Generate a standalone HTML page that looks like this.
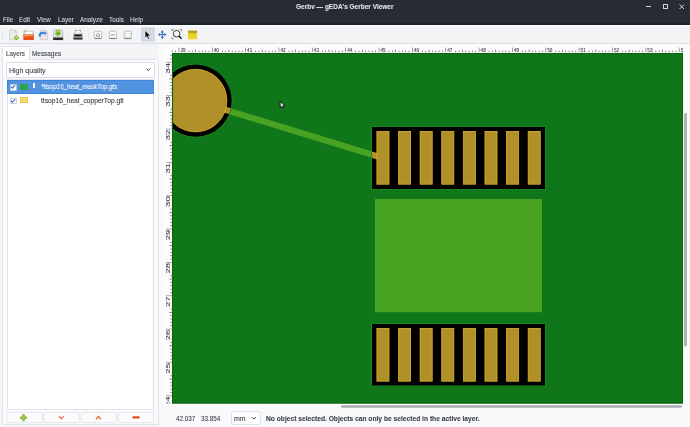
<!DOCTYPE html>
<html><head><meta charset="utf-8">
<style>
html,body{margin:0;padding:0;}
body{width:690px;height:427px;overflow:hidden;position:relative;background:#f8f9fa;font-family:"Liberation Sans",sans-serif;color:#3a3e44;}
.a{position:absolute;}
.t{position:absolute;white-space:nowrap;line-height:1;will-change:transform;-webkit-text-stroke:0.08px currentColor;}
#title{left:0;top:0;width:690px;height:25.4px;background:#272b33;box-shadow:inset 0 -1.6px 0 #1c1f25;}
#toolbar{left:0;top:25.4px;width:690px;height:17.6px;background:#f3f4f6;border-bottom:1px solid #dcdee3;box-shadow:inset 0 1.4px 0 #fdfdfe;}
</style></head><body>
<div id="title" class="a"></div>
<div class="t" style="left:296px;top:3.8px;font-size:6.5px;font-weight:bold;color:#e2e4e8;">Gerbv — gEDA's Gerber Viewer</div>
<!-- window controls -->
<div class="a" style="left:646px;top:6px;width:5px;height:1px;background:#d3d5da;"></div>
<div class="a" style="left:663px;top:4px;width:3px;height:3px;border:1px solid #d3d5da;"></div>
<svg class="a" style="left:679px;top:4px" width="6" height="6"><path d="M0.5 0.5L5 5M5 0.5L0.5 5" stroke="#d3d5da" stroke-width="1"/></svg>
<!-- menu -->
<div class="t" style="left:3px;top:17.3px;font-size:6.4px;color:#d3d5da;">File</div>
<div class="t" style="left:19px;top:17.3px;font-size:6.4px;color:#d3d5da;">Edit</div>
<div class="t" style="left:37px;top:17.3px;font-size:6.4px;color:#d3d5da;">View</div>
<div class="t" style="left:57.5px;top:17.3px;font-size:6.4px;color:#d3d5da;">Layer</div>
<div class="t" style="left:79.5px;top:17.3px;font-size:6.4px;color:#d3d5da;">Analyze</div>
<div class="t" style="left:108.5px;top:17.3px;font-size:6.4px;color:#d3d5da;">Tools</div>
<div class="t" style="left:130.3px;top:17.3px;font-size:6.4px;color:#d3d5da;">Help</div>

<div id="toolbar" class="a"></div>


<!-- toolbar icons -->
<svg class="a" style="left:0;top:25px" width="200" height="19">
  <!-- drag handle -->
  <g fill="#c5c8ce"><rect x="2" y="7" width="0.8" height="0.8"/><rect x="2" y="9" width="0.8" height="0.8"/><rect x="2" y="11" width="0.8" height="0.8"/><rect x="2" y="13" width="0.8" height="0.8"/></g>
  <!-- new -->
  <path d="M9.6 4.7H14.6L17 7.1V14.7H9.6Z" fill="#ececec" stroke="#c4c4c4" stroke-width="0.6"/>
  <path d="M14.6 4.7V7.1H17" fill="#d8d8d8" stroke="#b8b8b8" stroke-width="0.5"/>
  <path d="M16.4 9.9L19.2 12.7L16.4 15.3L13.6 12.7Z" fill="#5fa81c"/>
  <circle cx="16.4" cy="12.6" r="1.9" fill="#8cc63a"/>
  <circle cx="16.4" cy="11.9" r="0.9" fill="#e6ee70"/>
  <!-- open -->
  <path d="M23.8 5.4H27.6L28.6 6.4H33.4V14.6H23.8Z" fill="#dcdcdc" stroke="#b4b4b4" stroke-width="0.5"/>
  <rect x="24.4" y="5.9" width="1.4" height="1.2" fill="#f0a040"/>
  <rect x="25.4" y="6.9" width="7" height="3.4" fill="#fdfdfd" stroke="#d0d0d0" stroke-width="0.3"/>
  <path d="M23.4 9.6H33.9V14.2Q33.9 14.9 33.2 14.9H24.1Q23.4 14.9 23.4 14.2Z" fill="#e9501c"/>
  <rect x="23.4" y="9.6" width="10.5" height="1.8" fill="#f38a44"/>
  <rect x="24.4" y="10.6" width="4" height="0.5" fill="#fbb880"/>
  <!-- revert -->
  <path d="M40.3 5.2H45.5L47.6 7.3V14.7H40.3Z" fill="#e8e8e8" stroke="#c0c0c0" stroke-width="0.6"/>
  <path d="M38.6 11.2C38.2 8.2 40.6 6.2 43.6 6.9L45.2 7.4L44.8 5.8L46.8 8.6L43.8 10.2L44.4 8.9C42.2 8.4 40.4 9.6 40.6 12Z" fill="#3f86d4"/>
  <!-- save -->
  <path d="M53.2 7L54.4 4.6H61.8L63 7V14.8H53.2Z" fill="#dcdcdc" stroke="#a8a8a8" stroke-width="0.5"/>
  <rect x="53.1" y="12.6" width="10" height="2.3" fill="#2a2a2a" rx="0.6"/>
  <path d="M56.3 5.1H59.9V8H61.6L58.1 11.3L54.6 8H56.3Z" fill="#6ab820"/>
  <rect x="57" y="5.4" width="2.2" height="1.2" fill="#e8e060"/>
  <!-- sep -->
  <rect x="67.3" y="7.5" width="0.6" height="6" fill="#e0e2e6"/>
  <!-- print -->
  <rect x="75.2" y="5.2" width="5.6" height="3" fill="#fff" stroke="#8a8a8a" stroke-width="0.6"/>
  <rect x="73.4" y="7.8" width="9.2" height="6.6" rx="1" fill="#9a9ca0"/>
  <rect x="74.4" y="9.6" width="7.2" height="1.6" fill="#111"/>
  <rect x="73.4" y="12.8" width="9.2" height="1.8" rx="0.6" fill="#333"/>
  <rect x="74.6" y="7.3" width="6.8" height="1.5" fill="#f4f4f4"/>
  <rect x="88" y="7.5" width="0.6" height="6" fill="#e0e2e6"/>
  <!-- zoom icons -->
  <g fill="#fafafa" stroke="#9a9a9a" stroke-width="0.6">
    <rect x="94.3" y="6.2" width="7.4" height="7.4" rx="1.3"/>
    <rect x="109.3" y="6.2" width="7.4" height="7.4" rx="1.3"/>
    <rect x="124.1" y="6.2" width="7.4" height="7.4" rx="1.3"/>
  </g>
  <g stroke="#555" stroke-width="0.7" fill="none">
    <path d="M94.6 13.4H101.4M109.6 13.4H116.4M124.4 13.4H131.2"/>
  </g>
  <path d="M96.5 9.6L98 8.2L99.5 9.6V11.2H96.5Z" fill="none" stroke="#6a7a5a" stroke-width="0.7"/>
  <path d="M111 9.9H115M125.8 8.2V9M129.8 8.2V9M125.8 10.8V11.6M129.8 10.8V11.6" stroke="#6a7a6a" stroke-width="0.8"/>
  <!-- sep -->
  <rect x="137.5" y="7.5" width="0.6" height="6" fill="#e0e2e6"/>
  <!-- pointer pressed -->
  <rect x="141" y="2.3" width="14" height="14.4" rx="1.5" fill="#d3d8e2"/>
  <path d="M145 5.6L150.4 10.8L148.1 11L149.6 13.6L148.4 14.2L147 11.5L145.2 13Z" fill="#000" stroke="#fff" stroke-width="0.5"/>
  <!-- pan -->
  <g fill="#2d6db8">
    <path d="M162.3 5.3L164 7.4H160.6Z M162.3 14L164 11.8H160.6Z M158 9.6L160.1 7.9V11.3Z M166.6 9.6L164.5 7.9V11.3Z"/>
    <rect x="161.8" y="6.8" width="1" height="5.6"/>
    <rect x="159.5" y="9.1" width="5.6" height="1"/>
  </g>
  <!-- zoom tool -->
  <circle cx="176.6" cy="8.7" r="3.3" fill="#fff" stroke="#222" stroke-width="0.9"/>
  <path d="M178.9 11L181.6 13.7" stroke="#111" stroke-width="1.4"/>
  <path d="M172 6V4.6H173.4M181.6 6V4.6H180.2M172 12.4V13.8H173.4" stroke="#333" stroke-width="0.6" fill="none"/>
  <!-- measure -->
  <rect x="188" y="5.7" width="9" height="8.6" rx="0.6" fill="#eed524"/>
  <rect x="188" y="5.7" width="9" height="2" fill="#b39c2a"/>
  <path d="M189.5 7.5V9.5M191.7 7.5V8.8M193.9 7.5V9.5M196 7.5V8.8" stroke="#a08a20" stroke-width="0.6"/>
</svg>

<!-- left panel -->
<div class="a" style="left:0;top:44px;width:159px;height:383px;background:#f4f5f7;"></div>
<div class="a" style="left:2px;top:46px;width:26px;height:14px;background:#fff;border:1px solid #dfe2e8;border-bottom:none;border-radius:1.5px 1.5px 0 0;"></div>
<div class="a" style="left:29px;top:58.7px;width:129px;height:1px;background:#e2e4e9;"></div>
<div class="a" style="left:2px;top:59.7px;width:155.2px;height:364.6px;background:#fafbfc;border:1px solid #e0e3ea;border-top:none;"></div>
<div class="t" style="left:6px;top:51px;font-size:6.3px;">Layers</div>
<div class="t" style="left:32px;top:51px;font-size:6.4px;">Messages</div>
<div class="a" style="left:6px;top:62px;width:147px;height:14px;background:#fff;border:1px solid #d9dde5;border-radius:2px;"></div>
<div class="t" style="left:9px;top:67px;font-size:7px;">High quality</div>
<div class="a" style="left:7px;top:79px;width:145.2px;height:328.8px;background:#fff;border:1px solid #dfe2e8;"></div>
<div class="a" style="left:7px;top:80.1px;width:144.6px;height:11.7px;background:#5293df;border:1px solid #3e85da;"></div>


<div class="a" style="left:9.9px;top:84.2px;width:4.8px;height:4.8px;background:#fff;border:0.6px solid #c8ccd4;border-radius:1px;"></div>
<svg class="a" style="left:10px;top:84.2px" width="6" height="6"><path d="M1 2.7L2.4 4.2L5.2 1" stroke="#2f6fd0" stroke-width="1.1" fill="none"/></svg>
<div class="a" style="left:19.8px;top:84px;width:8.4px;height:6px;background:#2ea44f;"></div>
<div class="a" style="left:32.9px;top:83.3px;width:1.7px;height:4.7px;background:#e8eef8;box-shadow:inset 0 0 0 0.4px #fff;"></div>
<div class="t" style="left:40.5px;top:83.6px;font-size:6.6px;font-style:italic;color:#fff;transform:scaleX(0.935);transform-origin:0 0;">*ttsop16_heat_maskTop.gts</div>
<div class="a" style="left:9.9px;top:97.6px;width:4.8px;height:4.8px;background:#fff;border:0.6px solid #c8ccd4;border-radius:1px;"></div>
<svg class="a" style="left:10px;top:97.6px" width="6" height="6"><path d="M1 2.7L2.4 4.2L5.2 1" stroke="#2f6fd0" stroke-width="1.1" fill="none"/></svg>
<div class="a" style="left:19.8px;top:97.2px;width:8.4px;height:6.3px;background:#f7d96c;box-shadow:inset 0 0 0 0.5px #d8b84a;"></div>
<div class="t" style="left:40.5px;top:97.8px;font-size:6.7px;color:#31363b;">ttsop16_heat_copperTop.gtl</div>

<!-- rulers & canvas -->
<div class="a" style="left:159px;top:44px;width:531px;height:383px;background:#f9fafb;"></div>
<div class="a" style="left:163px;top:44px;width:521px;height:361px;background:#fcfcfd;"></div>
<svg class="a" style="left:0;top:0" width="690" height="427">
  <defs>
    <clipPath id="cv"><rect x="172" y="53" width="511" height="350.6"/></clipPath>
    <clipPath id="op"><circle cx="195.6" cy="100.65" r="36.2"/><rect x="372" y="127" width="173" height="62"/></clipPath>
  </defs>
  <g clip-path="url(#cv)">
    <rect x="172" y="53" width="511" height="350.6" fill="#10761a"/>
    <rect x="375" y="199" width="167" height="113.2" fill="#47a321"/>
    <line x1="195.5" y1="100.7" x2="383" y2="158" stroke="#47a321" stroke-width="6.2"/>
    <g fill="#1a8a21">
      <circle cx="195.6" cy="100.65" r="37"/>
      <rect x="371.2" y="126.2" width="174.6" height="63.6"/>
      <rect x="371.2" y="323.2" width="174.6" height="63.1"/>
    </g>
    <g fill="#000">
      <circle cx="195.6" cy="100.65" r="36.15"/>
      <rect x="372" y="127" width="173" height="62"/>
      <rect x="372" y="324" width="173" height="61.5"/>
    </g>
    <line x1="195.5" y1="100.7" x2="383" y2="158" stroke="#b09028" stroke-width="6.2" clip-path="url(#op)"/>
    <circle cx="195.6" cy="100.6" r="31.3" fill="#b09028" stroke="#dcb42e" stroke-width="0.8"/>
    <g fill="#b09028" stroke="#dcb42e" stroke-width="0.8">
      <rect x="376.90" y="131.4" width="12.1" height="52.8"/>
      <rect x="398.51" y="131.4" width="12.1" height="52.8"/>
      <rect x="420.12" y="131.4" width="12.1" height="52.8"/>
      <rect x="441.73" y="131.4" width="12.1" height="52.8"/>
      <rect x="463.34" y="131.4" width="12.1" height="52.8"/>
      <rect x="484.95" y="131.4" width="12.1" height="52.8"/>
      <rect x="506.56" y="131.4" width="12.1" height="52.8"/>
      <rect x="528.17" y="131.4" width="12.1" height="52.8"/>
      <rect x="376.90" y="328.4" width="12.1" height="52.8"/>
      <rect x="398.51" y="328.4" width="12.1" height="52.8"/>
      <rect x="420.12" y="328.4" width="12.1" height="52.8"/>
      <rect x="441.73" y="328.4" width="12.1" height="52.8"/>
      <rect x="463.34" y="328.4" width="12.1" height="52.8"/>
      <rect x="484.95" y="328.4" width="12.1" height="52.8"/>
      <rect x="506.56" y="328.4" width="12.1" height="52.8"/>
      <rect x="528.17" y="328.4" width="12.1" height="52.8"/>
    </g>
  </g>
  <rect x="172.5" y="53.5" width="510" height="349.6" fill="none" stroke="#0b6412" stroke-width="1.1"/>
  <!-- scrollbar -->
  <rect x="341" y="405.3" width="341" height="2.4" rx="1.2" fill="#abadb3"/>
  <rect x="684.1" y="113" width="2.8" height="233.5" rx="1.4" fill="#abadb3"/>
</svg>

<!-- rulers -->
<svg class="a" style="left:0;top:0" width="690" height="427">
<defs><clipPath id="rc"><rect x="0" y="0" width="683" height="403.6"/></clipPath></defs><g clip-path="url(#rc)">
<rect x="171.88" y="50.6" width="0.7" height="1.4" fill="#50535a"/>
<rect x="175.22" y="50.6" width="0.7" height="1.4" fill="#50535a"/>
<rect x="188.56" y="50.6" width="0.7" height="1.4" fill="#50535a"/>
<rect x="191.89" y="50.6" width="0.7" height="1.4" fill="#50535a"/>
<rect x="195.23" y="49.6" width="0.7" height="2.4" fill="#50535a"/>
<rect x="198.56" y="50.6" width="0.7" height="1.4" fill="#50535a"/>
<rect x="201.90" y="50.6" width="0.7" height="1.4" fill="#50535a"/>
<rect x="205.23" y="50.6" width="0.7" height="1.4" fill="#50535a"/>
<rect x="208.57" y="50.6" width="0.7" height="1.4" fill="#50535a"/>
<rect x="221.91" y="50.6" width="0.7" height="1.4" fill="#50535a"/>
<rect x="225.24" y="50.6" width="0.7" height="1.4" fill="#50535a"/>
<rect x="228.58" y="49.6" width="0.7" height="2.4" fill="#50535a"/>
<rect x="231.91" y="50.6" width="0.7" height="1.4" fill="#50535a"/>
<rect x="235.25" y="50.6" width="0.7" height="1.4" fill="#50535a"/>
<rect x="238.58" y="50.6" width="0.7" height="1.4" fill="#50535a"/>
<rect x="241.92" y="50.6" width="0.7" height="1.4" fill="#50535a"/>
<rect x="255.26" y="50.6" width="0.7" height="1.4" fill="#50535a"/>
<rect x="258.59" y="50.6" width="0.7" height="1.4" fill="#50535a"/>
<rect x="261.92" y="49.6" width="0.7" height="2.4" fill="#50535a"/>
<rect x="265.26" y="50.6" width="0.7" height="1.4" fill="#50535a"/>
<rect x="268.59" y="50.6" width="0.7" height="1.4" fill="#50535a"/>
<rect x="271.93" y="50.6" width="0.7" height="1.4" fill="#50535a"/>
<rect x="275.26" y="50.6" width="0.7" height="1.4" fill="#50535a"/>
<rect x="288.60" y="50.6" width="0.7" height="1.4" fill="#50535a"/>
<rect x="291.94" y="50.6" width="0.7" height="1.4" fill="#50535a"/>
<rect x="295.27" y="49.6" width="0.7" height="2.4" fill="#50535a"/>
<rect x="298.61" y="50.6" width="0.7" height="1.4" fill="#50535a"/>
<rect x="301.94" y="50.6" width="0.7" height="1.4" fill="#50535a"/>
<rect x="305.28" y="50.6" width="0.7" height="1.4" fill="#50535a"/>
<rect x="308.62" y="50.6" width="0.7" height="1.4" fill="#50535a"/>
<rect x="321.95" y="50.6" width="0.7" height="1.4" fill="#50535a"/>
<rect x="325.29" y="50.6" width="0.7" height="1.4" fill="#50535a"/>
<rect x="328.62" y="49.6" width="0.7" height="2.4" fill="#50535a"/>
<rect x="331.96" y="50.6" width="0.7" height="1.4" fill="#50535a"/>
<rect x="335.29" y="50.6" width="0.7" height="1.4" fill="#50535a"/>
<rect x="338.63" y="50.6" width="0.7" height="1.4" fill="#50535a"/>
<rect x="341.96" y="50.6" width="0.7" height="1.4" fill="#50535a"/>
<rect x="355.30" y="50.6" width="0.7" height="1.4" fill="#50535a"/>
<rect x="358.64" y="50.6" width="0.7" height="1.4" fill="#50535a"/>
<rect x="361.98" y="49.6" width="0.7" height="2.4" fill="#50535a"/>
<rect x="365.31" y="50.6" width="0.7" height="1.4" fill="#50535a"/>
<rect x="368.64" y="50.6" width="0.7" height="1.4" fill="#50535a"/>
<rect x="371.98" y="50.6" width="0.7" height="1.4" fill="#50535a"/>
<rect x="375.31" y="50.6" width="0.7" height="1.4" fill="#50535a"/>
<rect x="388.65" y="50.6" width="0.7" height="1.4" fill="#50535a"/>
<rect x="391.99" y="50.6" width="0.7" height="1.4" fill="#50535a"/>
<rect x="395.32" y="49.6" width="0.7" height="2.4" fill="#50535a"/>
<rect x="398.66" y="50.6" width="0.7" height="1.4" fill="#50535a"/>
<rect x="402.00" y="50.6" width="0.7" height="1.4" fill="#50535a"/>
<rect x="405.33" y="50.6" width="0.7" height="1.4" fill="#50535a"/>
<rect x="408.66" y="50.6" width="0.7" height="1.4" fill="#50535a"/>
<rect x="422.00" y="50.6" width="0.7" height="1.4" fill="#50535a"/>
<rect x="425.34" y="50.6" width="0.7" height="1.4" fill="#50535a"/>
<rect x="428.67" y="49.6" width="0.7" height="2.4" fill="#50535a"/>
<rect x="432.01" y="50.6" width="0.7" height="1.4" fill="#50535a"/>
<rect x="435.35" y="50.6" width="0.7" height="1.4" fill="#50535a"/>
<rect x="438.68" y="50.6" width="0.7" height="1.4" fill="#50535a"/>
<rect x="442.01" y="50.6" width="0.7" height="1.4" fill="#50535a"/>
<rect x="455.36" y="50.6" width="0.7" height="1.4" fill="#50535a"/>
<rect x="458.69" y="50.6" width="0.7" height="1.4" fill="#50535a"/>
<rect x="462.02" y="49.6" width="0.7" height="2.4" fill="#50535a"/>
<rect x="465.36" y="50.6" width="0.7" height="1.4" fill="#50535a"/>
<rect x="468.69" y="50.6" width="0.7" height="1.4" fill="#50535a"/>
<rect x="472.03" y="50.6" width="0.7" height="1.4" fill="#50535a"/>
<rect x="475.37" y="50.6" width="0.7" height="1.4" fill="#50535a"/>
<rect x="488.70" y="50.6" width="0.7" height="1.4" fill="#50535a"/>
<rect x="492.04" y="50.6" width="0.7" height="1.4" fill="#50535a"/>
<rect x="495.38" y="49.6" width="0.7" height="2.4" fill="#50535a"/>
<rect x="498.71" y="50.6" width="0.7" height="1.4" fill="#50535a"/>
<rect x="502.04" y="50.6" width="0.7" height="1.4" fill="#50535a"/>
<rect x="505.38" y="50.6" width="0.7" height="1.4" fill="#50535a"/>
<rect x="508.72" y="50.6" width="0.7" height="1.4" fill="#50535a"/>
<rect x="522.05" y="50.6" width="0.7" height="1.4" fill="#50535a"/>
<rect x="525.39" y="50.6" width="0.7" height="1.4" fill="#50535a"/>
<rect x="528.73" y="49.6" width="0.7" height="2.4" fill="#50535a"/>
<rect x="532.06" y="50.6" width="0.7" height="1.4" fill="#50535a"/>
<rect x="535.39" y="50.6" width="0.7" height="1.4" fill="#50535a"/>
<rect x="538.73" y="50.6" width="0.7" height="1.4" fill="#50535a"/>
<rect x="542.06" y="50.6" width="0.7" height="1.4" fill="#50535a"/>
<rect x="555.40" y="50.6" width="0.7" height="1.4" fill="#50535a"/>
<rect x="558.74" y="50.6" width="0.7" height="1.4" fill="#50535a"/>
<rect x="562.07" y="49.6" width="0.7" height="2.4" fill="#50535a"/>
<rect x="565.41" y="50.6" width="0.7" height="1.4" fill="#50535a"/>
<rect x="568.75" y="50.6" width="0.7" height="1.4" fill="#50535a"/>
<rect x="572.08" y="50.6" width="0.7" height="1.4" fill="#50535a"/>
<rect x="575.41" y="50.6" width="0.7" height="1.4" fill="#50535a"/>
<rect x="588.75" y="50.6" width="0.7" height="1.4" fill="#50535a"/>
<rect x="592.09" y="50.6" width="0.7" height="1.4" fill="#50535a"/>
<rect x="595.42" y="49.6" width="0.7" height="2.4" fill="#50535a"/>
<rect x="598.76" y="50.6" width="0.7" height="1.4" fill="#50535a"/>
<rect x="602.10" y="50.6" width="0.7" height="1.4" fill="#50535a"/>
<rect x="605.43" y="50.6" width="0.7" height="1.4" fill="#50535a"/>
<rect x="608.76" y="50.6" width="0.7" height="1.4" fill="#50535a"/>
<rect x="622.11" y="50.6" width="0.7" height="1.4" fill="#50535a"/>
<rect x="625.44" y="50.6" width="0.7" height="1.4" fill="#50535a"/>
<rect x="628.77" y="49.6" width="0.7" height="2.4" fill="#50535a"/>
<rect x="632.11" y="50.6" width="0.7" height="1.4" fill="#50535a"/>
<rect x="635.44" y="50.6" width="0.7" height="1.4" fill="#50535a"/>
<rect x="638.78" y="50.6" width="0.7" height="1.4" fill="#50535a"/>
<rect x="642.12" y="50.6" width="0.7" height="1.4" fill="#50535a"/>
<rect x="655.45" y="50.6" width="0.7" height="1.4" fill="#50535a"/>
<rect x="658.79" y="50.6" width="0.7" height="1.4" fill="#50535a"/>
<rect x="662.12" y="49.6" width="0.7" height="2.4" fill="#50535a"/>
<rect x="665.46" y="50.6" width="0.7" height="1.4" fill="#50535a"/>
<rect x="668.79" y="50.6" width="0.7" height="1.4" fill="#50535a"/>
<rect x="672.13" y="50.6" width="0.7" height="1.4" fill="#50535a"/>
<rect x="675.47" y="50.6" width="0.7" height="1.4" fill="#50535a"/>
<rect x="178.55" y="47.6" width="0.7" height="4.4" fill="#707378"/>
<rect x="211.90" y="47.6" width="0.7" height="4.4" fill="#707378"/>
<rect x="245.25" y="47.6" width="0.7" height="4.4" fill="#707378"/>
<rect x="278.60" y="47.6" width="0.7" height="4.4" fill="#707378"/>
<rect x="311.95" y="47.6" width="0.7" height="4.4" fill="#707378"/>
<rect x="345.30" y="47.6" width="0.7" height="4.4" fill="#707378"/>
<rect x="378.65" y="47.6" width="0.7" height="4.4" fill="#707378"/>
<rect x="412.00" y="47.6" width="0.7" height="4.4" fill="#707378"/>
<rect x="445.35" y="47.6" width="0.7" height="4.4" fill="#707378"/>
<rect x="478.70" y="47.6" width="0.7" height="4.4" fill="#707378"/>
<rect x="512.05" y="47.6" width="0.7" height="4.4" fill="#707378"/>
<rect x="545.40" y="47.6" width="0.7" height="4.4" fill="#707378"/>
<rect x="578.75" y="47.6" width="0.7" height="4.4" fill="#707378"/>
<rect x="612.10" y="47.6" width="0.7" height="4.4" fill="#707378"/>
<rect x="645.45" y="47.6" width="0.7" height="4.4" fill="#707378"/>
<rect x="678.80" y="47.6" width="0.7" height="4.4" fill="#707378"/>
<rect x="170.4" y="55.28" width="1.4" height="0.7" fill="#50535a"/>
<rect x="170.4" y="58.61" width="1.4" height="0.7" fill="#50535a"/>
<rect x="170.4" y="75.29" width="1.4" height="0.7" fill="#50535a"/>
<rect x="169.4" y="78.62" width="2.4" height="0.7" fill="#50535a"/>
<rect x="170.4" y="81.96" width="1.4" height="0.7" fill="#50535a"/>
<rect x="170.4" y="85.30" width="1.4" height="0.7" fill="#50535a"/>
<rect x="170.4" y="88.63" width="1.4" height="0.7" fill="#50535a"/>
<rect x="170.4" y="91.97" width="1.4" height="0.7" fill="#50535a"/>
<rect x="170.4" y="108.64" width="1.4" height="0.7" fill="#50535a"/>
<rect x="169.4" y="111.97" width="2.4" height="0.7" fill="#50535a"/>
<rect x="170.4" y="115.31" width="1.4" height="0.7" fill="#50535a"/>
<rect x="170.4" y="118.65" width="1.4" height="0.7" fill="#50535a"/>
<rect x="170.4" y="121.98" width="1.4" height="0.7" fill="#50535a"/>
<rect x="170.4" y="125.31" width="1.4" height="0.7" fill="#50535a"/>
<rect x="170.4" y="141.99" width="1.4" height="0.7" fill="#50535a"/>
<rect x="169.4" y="145.33" width="2.4" height="0.7" fill="#50535a"/>
<rect x="170.4" y="148.66" width="1.4" height="0.7" fill="#50535a"/>
<rect x="170.4" y="152.00" width="1.4" height="0.7" fill="#50535a"/>
<rect x="170.4" y="155.33" width="1.4" height="0.7" fill="#50535a"/>
<rect x="170.4" y="158.66" width="1.4" height="0.7" fill="#50535a"/>
<rect x="170.4" y="175.34" width="1.4" height="0.7" fill="#50535a"/>
<rect x="169.4" y="178.67" width="2.4" height="0.7" fill="#50535a"/>
<rect x="170.4" y="182.01" width="1.4" height="0.7" fill="#50535a"/>
<rect x="170.4" y="185.34" width="1.4" height="0.7" fill="#50535a"/>
<rect x="170.4" y="188.68" width="1.4" height="0.7" fill="#50535a"/>
<rect x="170.4" y="192.02" width="1.4" height="0.7" fill="#50535a"/>
<rect x="170.4" y="208.69" width="1.4" height="0.7" fill="#50535a"/>
<rect x="169.4" y="212.03" width="2.4" height="0.7" fill="#50535a"/>
<rect x="170.4" y="215.36" width="1.4" height="0.7" fill="#50535a"/>
<rect x="170.4" y="218.70" width="1.4" height="0.7" fill="#50535a"/>
<rect x="170.4" y="222.03" width="1.4" height="0.7" fill="#50535a"/>
<rect x="170.4" y="225.36" width="1.4" height="0.7" fill="#50535a"/>
<rect x="170.4" y="242.04" width="1.4" height="0.7" fill="#50535a"/>
<rect x="169.4" y="245.38" width="2.4" height="0.7" fill="#50535a"/>
<rect x="170.4" y="248.71" width="1.4" height="0.7" fill="#50535a"/>
<rect x="170.4" y="252.04" width="1.4" height="0.7" fill="#50535a"/>
<rect x="170.4" y="255.38" width="1.4" height="0.7" fill="#50535a"/>
<rect x="170.4" y="258.71" width="1.4" height="0.7" fill="#50535a"/>
<rect x="170.4" y="275.39" width="1.4" height="0.7" fill="#50535a"/>
<rect x="169.4" y="278.72" width="2.4" height="0.7" fill="#50535a"/>
<rect x="170.4" y="282.06" width="1.4" height="0.7" fill="#50535a"/>
<rect x="170.4" y="285.39" width="1.4" height="0.7" fill="#50535a"/>
<rect x="170.4" y="288.73" width="1.4" height="0.7" fill="#50535a"/>
<rect x="170.4" y="292.06" width="1.4" height="0.7" fill="#50535a"/>
<rect x="170.4" y="308.74" width="1.4" height="0.7" fill="#50535a"/>
<rect x="169.4" y="312.07" width="2.4" height="0.7" fill="#50535a"/>
<rect x="170.4" y="315.41" width="1.4" height="0.7" fill="#50535a"/>
<rect x="170.4" y="318.75" width="1.4" height="0.7" fill="#50535a"/>
<rect x="170.4" y="322.08" width="1.4" height="0.7" fill="#50535a"/>
<rect x="170.4" y="325.41" width="1.4" height="0.7" fill="#50535a"/>
<rect x="170.4" y="342.09" width="1.4" height="0.7" fill="#50535a"/>
<rect x="169.4" y="345.43" width="2.4" height="0.7" fill="#50535a"/>
<rect x="170.4" y="348.76" width="1.4" height="0.7" fill="#50535a"/>
<rect x="170.4" y="352.09" width="1.4" height="0.7" fill="#50535a"/>
<rect x="170.4" y="355.43" width="1.4" height="0.7" fill="#50535a"/>
<rect x="170.4" y="358.76" width="1.4" height="0.7" fill="#50535a"/>
<rect x="170.4" y="375.44" width="1.4" height="0.7" fill="#50535a"/>
<rect x="169.4" y="378.77" width="2.4" height="0.7" fill="#50535a"/>
<rect x="170.4" y="382.11" width="1.4" height="0.7" fill="#50535a"/>
<rect x="170.4" y="385.44" width="1.4" height="0.7" fill="#50535a"/>
<rect x="170.4" y="388.78" width="1.4" height="0.7" fill="#50535a"/>
<rect x="170.4" y="392.12" width="1.4" height="0.7" fill="#50535a"/>
<rect x="166" y="61.95" width="6" height="0.7" fill="#8a8d92"/>
<rect x="166" y="95.30" width="6" height="0.7" fill="#8a8d92"/>
<rect x="166" y="128.65" width="6" height="0.7" fill="#8a8d92"/>
<rect x="166" y="162.00" width="6" height="0.7" fill="#8a8d92"/>
<rect x="166" y="195.35" width="6" height="0.7" fill="#8a8d92"/>
<rect x="166" y="228.70" width="6" height="0.7" fill="#8a8d92"/>
<rect x="166" y="262.05" width="6" height="0.7" fill="#8a8d92"/>
<rect x="166" y="295.40" width="6" height="0.7" fill="#8a8d92"/>
<rect x="166" y="328.75" width="6" height="0.7" fill="#8a8d92"/>
<rect x="166" y="362.10" width="6" height="0.7" fill="#8a8d92"/>
<rect x="166" y="395.45" width="6" height="0.7" fill="#8a8d92"/>
<g font-family="Liberation Sans" font-size="4.8" fill="#3a3d42" stroke="#3a3d42" stroke-width="0.08">
<text x="180.40" y="52.2" textLength="5.2" lengthAdjust="spacingAndGlyphs">39</text>
<text x="213.75" y="52.2" textLength="5.2" lengthAdjust="spacingAndGlyphs">40</text>
<text x="247.10" y="52.2" textLength="5.2" lengthAdjust="spacingAndGlyphs">41</text>
<text x="280.45" y="52.2" textLength="5.2" lengthAdjust="spacingAndGlyphs">42</text>
<text x="313.80" y="52.2" textLength="5.2" lengthAdjust="spacingAndGlyphs">43</text>
<text x="347.15" y="52.2" textLength="5.2" lengthAdjust="spacingAndGlyphs">44</text>
<text x="380.50" y="52.2" textLength="5.2" lengthAdjust="spacingAndGlyphs">45</text>
<text x="413.85" y="52.2" textLength="5.2" lengthAdjust="spacingAndGlyphs">46</text>
<text x="447.20" y="52.2" textLength="5.2" lengthAdjust="spacingAndGlyphs">47</text>
<text x="480.55" y="52.2" textLength="5.2" lengthAdjust="spacingAndGlyphs">48</text>
<text x="513.90" y="52.2" textLength="5.2" lengthAdjust="spacingAndGlyphs">49</text>
<text x="547.25" y="52.2" textLength="5.2" lengthAdjust="spacingAndGlyphs">50</text>
<text x="580.60" y="52.2" textLength="5.2" lengthAdjust="spacingAndGlyphs">51</text>
<text x="613.95" y="52.2" textLength="5.2" lengthAdjust="spacingAndGlyphs">52</text>
<text x="647.30" y="52.2" textLength="5.2" lengthAdjust="spacingAndGlyphs">53</text>
<text x="680.65" y="52.2" textLength="5.2" lengthAdjust="spacingAndGlyphs">54</text>
<text transform="translate(169.6,73.50) rotate(-90)" textLength="10.6" lengthAdjust="spacingAndGlyphs">34</text>
<text transform="translate(169.6,106.85) rotate(-90)" textLength="10.6" lengthAdjust="spacingAndGlyphs">33</text>
<text transform="translate(169.6,140.20) rotate(-90)" textLength="10.6" lengthAdjust="spacingAndGlyphs">32</text>
<text transform="translate(169.6,173.55) rotate(-90)" textLength="10.6" lengthAdjust="spacingAndGlyphs">31</text>
<text transform="translate(169.6,206.90) rotate(-90)" textLength="10.6" lengthAdjust="spacingAndGlyphs">30</text>
<text transform="translate(169.6,240.25) rotate(-90)" textLength="10.6" lengthAdjust="spacingAndGlyphs">29</text>
<text transform="translate(169.6,273.60) rotate(-90)" textLength="10.6" lengthAdjust="spacingAndGlyphs">28</text>
<text transform="translate(169.6,306.95) rotate(-90)" textLength="10.6" lengthAdjust="spacingAndGlyphs">27</text>
<text transform="translate(169.6,340.30) rotate(-90)" textLength="10.6" lengthAdjust="spacingAndGlyphs">26</text>
<text transform="translate(169.6,373.65) rotate(-90)" textLength="10.6" lengthAdjust="spacingAndGlyphs">25</text>
<text transform="translate(169.6,407.00) rotate(-90)" textLength="10.6" lengthAdjust="spacingAndGlyphs">24</text>
</g></g></svg>
<!-- status bar -->
<div class="t" style="left:176px;top:416px;font-size:6.3px;">42.037</div>
<div class="t" style="left:200.5px;top:416px;font-size:6.3px;">33.854</div>
<div class="a" style="left:231.4px;top:411.3px;width:27.2px;height:12.2px;background:#fbfcfd;border:1px solid #dde0e7;border-radius:2.2px;"></div>
<div class="t" style="left:233.9px;top:415px;font-size:7px;">mm</div>
<div class="t" style="left:265.5px;top:416px;font-size:6.68px;font-weight:bold;">No object selected. Objects can only be selected in the active layer.</div>

<svg class="a" style="left:0;top:0" width="690" height="427">
  <!-- dropdown chevron -->
  <path d="M146.5 68.6L148.4 70.5L150.3 68.6" stroke="#3a3d42" stroke-width="1" fill="none"/>
  <!-- mm chevron -->
  <path d="M252 417.2L253.9 419.1L255.8 417.2" stroke="#3a3d42" stroke-width="1" fill="none"/>
  <!-- bottom buttons -->
  <g fill="#fbfbfc" stroke="#d9dde7" stroke-width="0.7">
    <rect x="6.8" y="412.3" width="35.7" height="10.4" rx="1.2"/>
    <rect x="43.8" y="412.3" width="35.4" height="10.4" rx="1.2"/>
    <rect x="81.1" y="412.3" width="35.4" height="10.4" rx="1.2"/>
    <rect x="118.3" y="412.3" width="35.7" height="10.4" rx="1.2"/>
  </g>
  <path d="M22.6 414.6H24.4V416.8H26.6V418.6H24.4V420.8H22.6V418.6H20.4V416.8H22.6Z" fill="#a6cc3c" stroke="#6c9a1a" stroke-width="0.6"/>
  <path d="M59 416.3L61.3 418.6L63.6 416.3" stroke="#e8622a" stroke-width="1.2" fill="none"/>
  <path d="M95.8 419.3L98.4 416.5L101 419.3" stroke="#e8622a" stroke-width="1.2" fill="none"/>
  <rect x="132.6" y="416.3" width="7" height="2.2" fill="#e04a1c"/>
  <!-- pane handle -->
  <g fill="#c8cbd2"><rect x="161.7" y="232" width="0.6" height="0.6"/><rect x="161.7" y="234" width="0.6" height="0.6"/><rect x="161.7" y="236" width="0.6" height="0.6"/></g>
  <!-- cursor -->
  <path d="M280.2 101.2V107.8L281.7 106.4L282.7 108.4L283.6 107.9L282.7 105.9H284.6Z" fill="#f4f4f6" stroke="#000" stroke-width="0.8" stroke-linejoin="round"/>
</svg>
</body></html>
